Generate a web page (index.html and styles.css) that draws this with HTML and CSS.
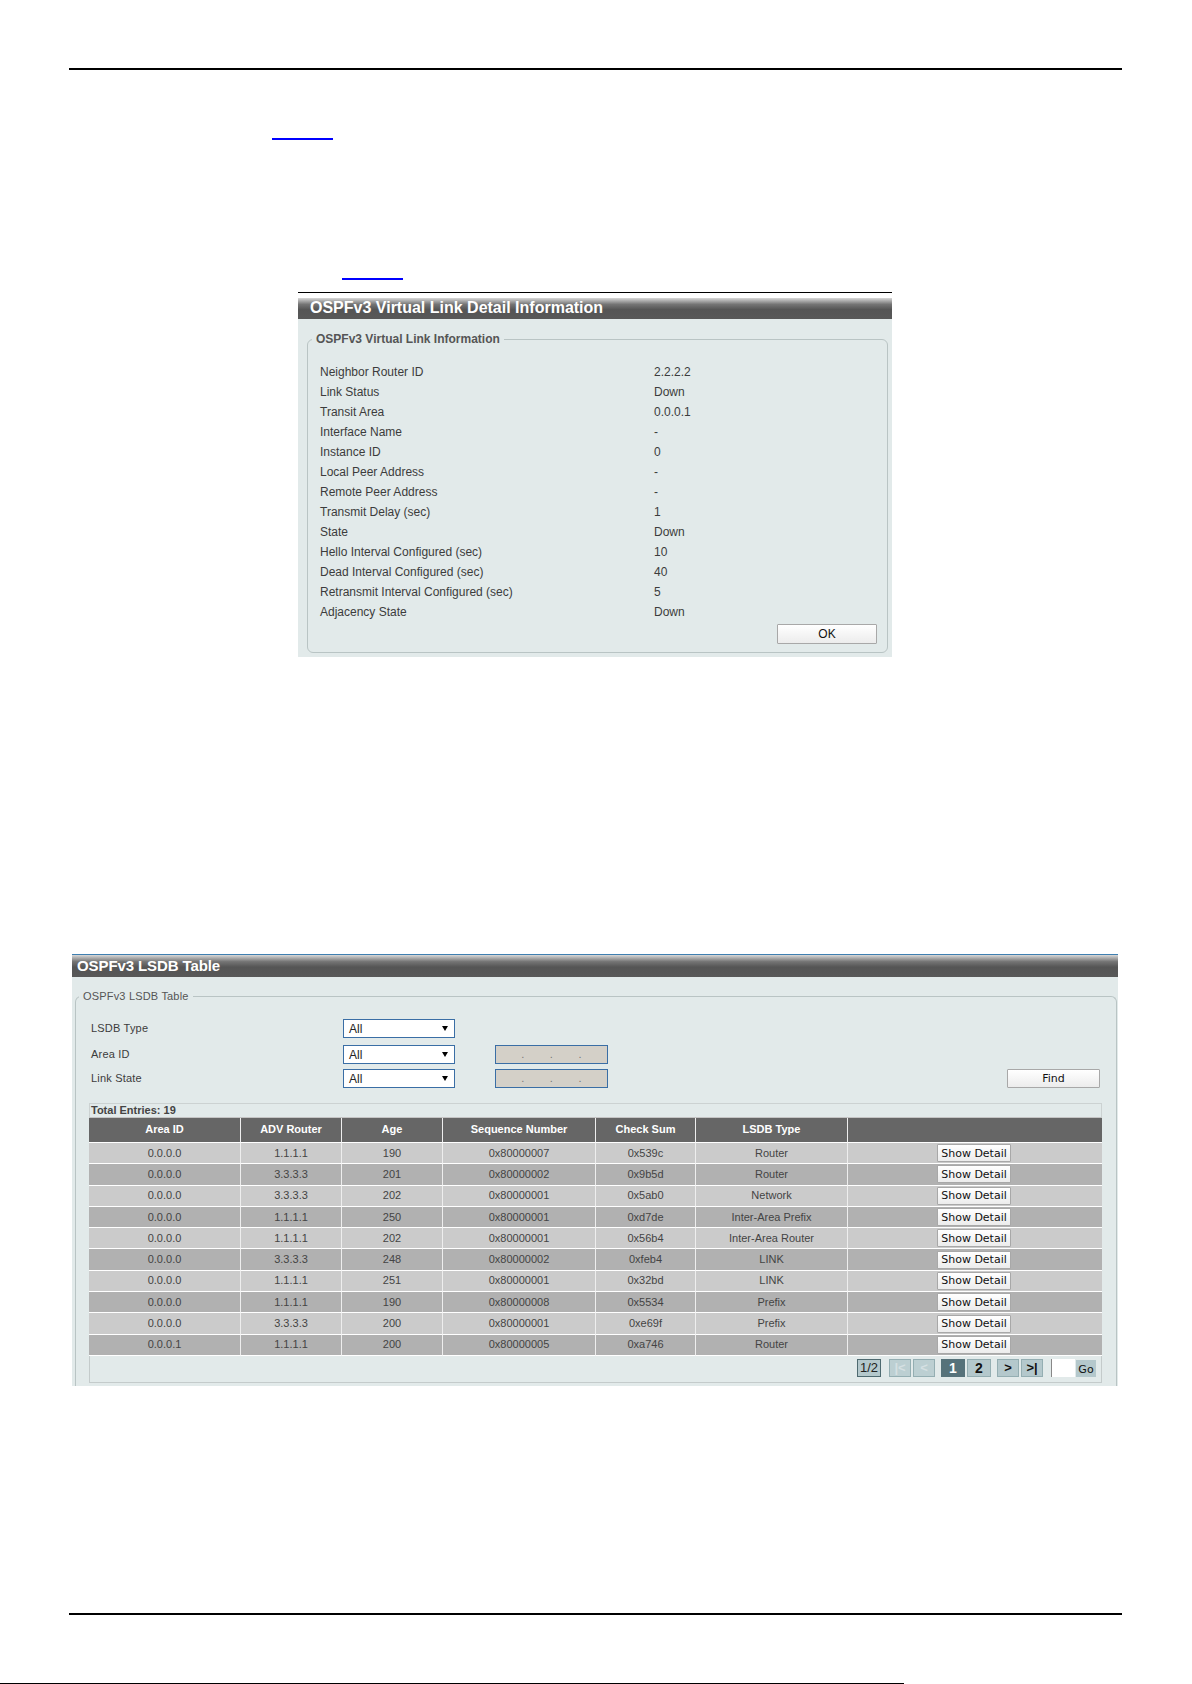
FILE: index.html
```html
<html>
	<head>
		<title>OSPFv3 Virtual Link and LSDB Table</title>
		<link rel="stylesheet" href="styles.css">
	</head>
	<body>

		<div class="head-rule"></div>
		<div class="link-line first"><a class="link-mark"></a></div>
		<div class="link-line second"><a class="link-mark"></a></div>

		<div class="dialog">
			<div class="dialog-top"></div>
			<div class="dialog-body">
				<h2 class="title">OSPFv3 Virtual Link Detail Information</h2>
				<fieldset class="group">
					<legend>OSPFv3 Virtual Link Information</legend>
					<div class="info">
						<div>Neighbor Router ID</div><div>2.2.2.2</div>
						<div>Link Status</div><div>Down</div>
						<div>Transit Area</div><div>0.0.0.1</div>
						<div>Interface Name</div><div>-</div>
						<div>Instance ID</div><div>0</div>
						<div>Local Peer Address</div><div>-</div>
						<div>Remote Peer Address</div><div>-</div>
						<div>Transmit Delay (sec)</div><div>1</div>
						<div>State</div><div>Down</div>
						<div>Hello Interval Configured (sec)</div><div>10</div>
						<div>Dead Interval Configured (sec)</div><div>40</div>
						<div>Retransmit Interval Configured (sec)</div><div>5</div>
						<div>Adjacency State</div><div>Down</div>
					</div>
					<div class="actions"><button class="btn ok">OK</button></div>
				</fieldset>
			</div>
		</div>

		<div class="panel">
			<h2 class="title small">OSPFv3 LSDB Table</h2>
			<fieldset class="group open">
				<legend>OSPFv3 LSDB Table</legend>
				<div class="filter">
					<div>LSDB Type</div>
					<div class="select">All<span class="arrow"></span></div>
					<div></div>
					<div></div>
					<div></div>

					<div>Area ID</div>
					<div class="select">All<span class="arrow"></span></div>
					<div></div>
					<div class="ipbox"><span>.</span><span>.</span><span>.</span></div>
					<div></div>

					<div>Link State</div>
					<div class="select">All<span class="arrow"></span></div>
					<div></div>
					<div class="ipbox"><span>.</span><span>.</span><span>.</span></div>
					<div class="find-cell"><button class="btn find">Find</button></div>
				</div>

				<div class="entries">
					<div class="total">Total Entries: 19</div>
					<table class="lsdb">
						<colgroup>
							<col class="c1"><col class="c2"><col class="c3"><col class="c4"><col class="c5"><col class="c6"><col class="c7">
						</colgroup>
						<thead>
							<tr><th>Area ID</th><th>ADV Router</th><th>Age</th><th>Sequence Number</th><th>Check Sum</th><th>LSDB Type</th><th></th></tr>
						</thead>
						<tbody>
							<tr><td>0.0.0.0</td><td>1.1.1.1</td><td>190</td><td>0x80000007</td><td>0x539c</td><td>Router</td><td><button class="btn detail">Show Detail</button></td></tr>
							<tr><td>0.0.0.0</td><td>3.3.3.3</td><td>201</td><td>0x80000002</td><td>0x9b5d</td><td>Router</td><td><button class="btn detail">Show Detail</button></td></tr>
							<tr><td>0.0.0.0</td><td>3.3.3.3</td><td>202</td><td>0x80000001</td><td>0x5ab0</td><td>Network</td><td><button class="btn detail">Show Detail</button></td></tr>
							<tr><td>0.0.0.0</td><td>1.1.1.1</td><td>250</td><td>0x80000001</td><td>0xd7de</td><td>Inter-Area Prefix</td><td><button class="btn detail">Show Detail</button></td></tr>
							<tr><td>0.0.0.0</td><td>1.1.1.1</td><td>202</td><td>0x80000001</td><td>0x56b4</td><td>Inter-Area Router</td><td><button class="btn detail">Show Detail</button></td></tr>
							<tr><td>0.0.0.0</td><td>3.3.3.3</td><td>248</td><td>0x80000002</td><td>0xfeb4</td><td>LINK</td><td><button class="btn detail">Show Detail</button></td></tr>
							<tr><td>0.0.0.0</td><td>1.1.1.1</td><td>251</td><td>0x80000001</td><td>0x32bd</td><td>LINK</td><td><button class="btn detail">Show Detail</button></td></tr>
							<tr><td>0.0.0.0</td><td>1.1.1.1</td><td>190</td><td>0x80000008</td><td>0x5534</td><td>Prefix</td><td><button class="btn detail">Show Detail</button></td></tr>
							<tr><td>0.0.0.0</td><td>3.3.3.3</td><td>200</td><td>0x80000001</td><td>0xe69f</td><td>Prefix</td><td><button class="btn detail">Show Detail</button></td></tr>
							<tr><td>0.0.0.1</td><td>1.1.1.1</td><td>200</td><td>0x80000005</td><td>0xa746</td><td>Router</td><td><button class="btn detail">Show Detail</button></td></tr>
						</tbody>
					</table>
					<div class="pager">
						<span class="page count">1/2</span>
						<span class="page nav off">|&lt;</span>
						<span class="page nav off">&lt;</span>
						<span class="page num now">1</span>
						<span class="page num">2</span>
						<span class="page nav">&gt;</span>
						<span class="page nav">&gt;|</span>
						<span class="page-input"></span>
						<span class="page go">Go</span>
					</div>
				</div>
			</fieldset>
		</div>

		<div class="foot-rule"></div>
		<div class="note-rule"></div>

	</body>
</html>
```

FILE: styles.css
```css
body {
	font-family: "Liberation Sans", Arial, sans-serif;
	font-size: 12px;
	color: #3c3c3c;
	background-color: #fff;
	margin: 0;
}

.head-rule {
	height: 2px;
	margin: 68px 70px 0 69px;
	background-color: #000;
}

.foot-rule {
	height: 2px;
	margin: 227px 70px 0 69px;
	background-color: #000;
}

.note-rule {
	width: 904px;
	height: 1px;
	margin-top: 68px;
	background-color: #000;
}

.link-line {
	height: 2px;
}

.link-line.first {
	margin: 68px 0 0 272px;
}

.link-line.second {
	margin: 138px 0 0 342px;
}

.link-mark {
	display: block;
	width: 61px;
	height: 2px;
	background-color: #00f;
}

/* title bars */
.title {
	height: 21px;
	margin: 0;
	padding-left: 12px;
	font-size: 16px;
	line-height: 19px;
	font-weight: bold;
	color: #fff;
	background: linear-gradient(#d8d8d8 0, #757575 30%, #555 55%, #585858 100%);
}

.title.small {
	height: 22px;
	padding-left: 5px;
	font-size: 15px;
	letter-spacing: -0.1px;
	line-height: 22px;
}

.dialog {
	width: 594px;
	margin: 12px 0 0 298px;
}

.dialog-top {
	height: 5px;
	border-top: 1px solid #000;
}

.dialog-body {
	background-color: #e2eaea;
	overflow: hidden;
}

.panel {
	width: 1046px;
	margin: 297px 0 0 72px;
	border-top: 1px solid #3f7fb0;
	background-color: #e2eaea;
	overflow: hidden;
}

.group {
	margin: 13px 4px 4px 9px;
	padding: 16px 10px 8px 12px;
	border: 1px solid #b9c4c4;
	border-radius: 6px;
}

.group legend {
	margin-left: -8px;
	padding: 0 4px;
	font-weight: bold;
	line-height: 14px;
	color: #555;
}

.group.open {
	margin: 12px 1px 0 3px;
	padding: 16px 14px 3px 13px;
	border-bottom: 0;
	border-radius: 6px 6px 0 0;
	font-size: 11px;
}

.group.open legend {
	margin-left: -10px;
	font-weight: normal;
	letter-spacing: 0.18px;
}

.info {
	display: grid;
	grid-template-columns: 334px 1fr;
	grid-auto-rows: 20px;
	line-height: 20px;
}

.actions {
	display: flex;
	justify-content: flex-end;
	margin-top: 2px;
}

.btn {
	padding: 0;
	border: 1px solid #a8a8a8;
	border-radius: 1px;
	background: linear-gradient(#fff, #ececec);
	color: #111;
	font-family: "DejaVu Sans", Verdana, sans-serif;
	font-size: 11px;
}

.btn.ok {
	width: 100px;
	height: 20px;
	font-family: "Liberation Sans", Arial, sans-serif;
	font-size: 12px;
}

.btn.find {
	width: 93px;
	height: 19px;
}

.btn.detail {
	display: block;
	width: 74px;
	height: 18px;
	margin: 0 auto;
}

/* filter form */
.filter {
	display: grid;
	grid-template-columns: 252px 112px 40px 113px 1fr;
	grid-template-rows: 26px 24px 19px;
	line-height: 19px;
	letter-spacing: 0.2px;
	padding-left: 2px;
}

.filter > div {
	height: 19px;
}

.select {
	position: relative;
	box-sizing: border-box;
	padding-left: 5px;
	border: 1px solid #3a6ea5;
	background-color: #fff;
	font-size: 12px;
	line-height: 19px;
	letter-spacing: 0;
	color: #222;
}

.arrow {
	position: absolute;
	right: 6px;
	top: 6px;
	border-left: 3px solid transparent;
	border-right: 3px solid transparent;
	border-top: 5px solid #000;
}

.ipbox {
	display: flex;
	justify-content: space-evenly;
	box-sizing: border-box;
	border: 1px solid #3a6ea5;
	background-color: #d4d0c8;
	line-height: 17px;
	color: #777;
}

.find-cell {
	display: flex;
	justify-content: flex-end;
	padding-right: 2px;
}

/* entries table */
.entries {
	margin-top: 15px;
	border-top: 1px solid #ccd2d2;
	border-bottom: 1px solid #c4cbcb;
}

.total {
	height: 13px;
	padding-left: 1px;
	border-left: 1px solid #ccd2d2;
	border-right: 1px solid #ccd2d2;
	border-bottom: 1px solid #c4c4c4;
	line-height: 13px;
	font-weight: bold;
	color: #444;
}

.lsdb {
	width: 1013px;
	table-layout: fixed;
	border-collapse: separate;
	border-spacing: 0;
}

.c1 { width: 152px; }
.c2 { width: 101px; }
.c3 { width: 101px; }
.c4 { width: 153px; }
.c5 { width: 100px; }
.c6 { width: 152px; }
.c7 { width: 254px; }

.lsdb th, .lsdb td {
	box-sizing: border-box;
	padding: 0;
	border-right: 1px solid #eee;
	border-bottom: 1px solid #fff;
	text-align: center;
	font-size: 11px;
}

.lsdb th:last-child, .lsdb td:last-child {
	border-right: 0;
}

.lsdb th {
	height: 25px;
	padding-bottom: 2px;
	background-color: #666;
	color: #fff;
	font-weight: bold;
}

.lsdb td {
	height: 21.3px;
	padding-bottom: 1px;
	color: #444;
}

.lsdb td:last-child {
	padding: 0 2px 0 0;
}

.lsdb tbody tr:nth-child(odd) td {
	background-color: #cbcbcb;
}

.lsdb tbody tr:nth-child(even) td {
	background-color: #b1b1b1;
}

.pager {
	display: flex;
	justify-content: flex-end;
	height: 23px;
	padding: 3px 5px 0 0;
	border-left: 1px solid #c4cbcb;
	border-right: 1px solid #c4cbcb;
}

.page {
	box-sizing: border-box;
	height: 18px;
	margin-left: 2px;
	border: 1px solid #94aeb2;
	background-color: #b4c8cc;
	text-align: center;
	font-size: 13px;
	font-weight: bold;
	line-height: 16px;
	color: #111;
}

.page.count {
	width: 24px;
	border-color: #4e6a70;
	font-weight: normal;
	color: #222;
}

.page.nav { width: 22px; }
.page.num { width: 24px; font-size: 14px; }
.page.off { background-color: #bccfd2; color: #d5e0e2; }
.page.now { background-color: #56727a; border-color: #56727a; color: #fff; }

.page.count + .page.off { margin-left: 8px; }
.page.off + .page.num { margin-left: 6px; }
.page.num + .page.nav { margin-left: 6px; }

.page-input {
	box-sizing: border-box;
	width: 24px;
	height: 18px;
	margin-left: 8px;
	border-left: 1px solid #888;
	background-color: #fff;
}

.page.go {
	width: 20px;
	height: 17px;
	margin: 1px 0 0 1px;
	border: 0;
	font-family: "DejaVu Sans", Verdana, sans-serif;
	font-size: 11px;
	font-weight: normal;
	line-height: 19px;
}
```
